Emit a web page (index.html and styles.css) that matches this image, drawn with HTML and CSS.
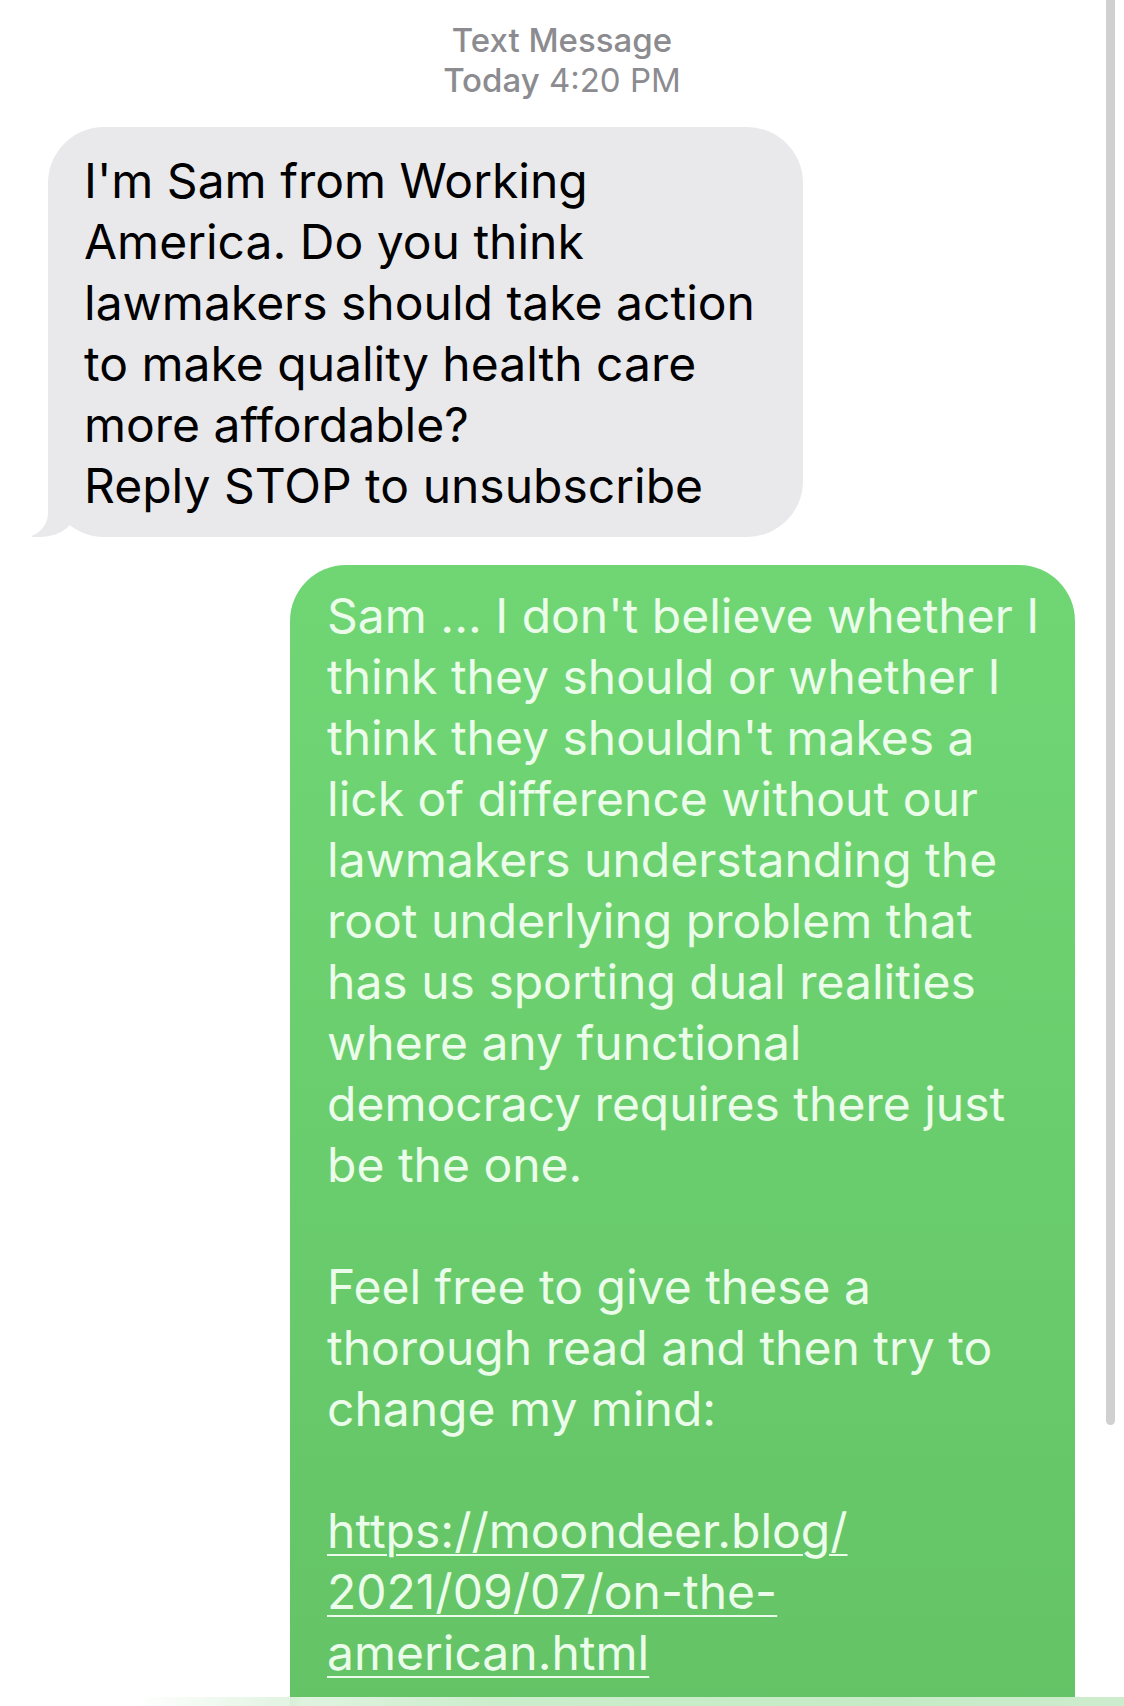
FILE: index.html
```html
<!DOCTYPE html>
<html lang="en">
<head>
<meta charset="utf-8">
<title>Text Message</title>
<link rel="stylesheet" href="styles.css">
</head>
<body>
<div class="screen">
  <header class="thread-header">
    <div class="thread-kind">Text Message</div>
    <div class="thread-time"><span class="day">Today</span> 4:20 PM</div>
  </header>

  <div class="messages">
    <div class="row row-in">
      <div class="bubble bubble-in">
        I'm Sam from Working<br>
        America. Do you think<br>
        lawmakers should take action<br>
        to make quality health care<br>
        more affordable?<br>
        Reply STOP to unsubscribe
      </div>
    </div>

    <div class="row row-out">
      <div class="bubble bubble-out">
        <p class="para">Sam ... I don't believe whether I<br>
        think they should or whether I<br>
        think they shouldn't makes a<br>
        lick of difference without our<br>
        lawmakers understanding the<br>
        root underlying problem that<br>
        has us sporting dual realities<br>
        where any functional<br>
        democracy requires there just<br>
        be the one.</p>
        <p class="para">Feel free to give these a<br>
        thorough read and then try to<br>
        change my mind:</p>
        <p class="para"><a class="link" href="#">https://moondeer.blog/<br>2021/09/07/on-the-<br>american.html</a></p>
      </div>
    </div>
  </div>

  <div class="scrollbar"></div>
  <div class="bottom-fade"></div>
</div>
</body>
</html>
```

FILE: styles.css
```css
* {
  box-sizing: border-box;
}

html, body {
  margin: 0;
  padding: 0;
  background: #ffffff;
}

.screen {
  position: relative;
  width: 1124px;
  height: 1706px;
  overflow: hidden;
  font-family: "Inter", "Roboto", "Liberation Sans", sans-serif;
  background: #ffffff;
}

.thread-header {
  padding-top: 21px;
  text-align: center;
  color: #8b8b90;
  font-size: 33px;
  line-height: 39.5px;
  font-weight: 500;
}

.thread-time {
  font-weight: 400;
}

.thread-time .day {
  font-weight: 500;
}

.messages {
  display: flex;
  flex-direction: column;
  gap: 28px;
  margin-top: 27px;
}

.row {
  display: flex;
}

.row-in {
  justify-content: flex-start;
  padding-left: 48px;
}

.row-out {
  justify-content: flex-end;
  padding-right: 49px;
}

.bubble {
  position: relative;
  font-size: 48px;
  line-height: 61px;
  border-radius: 56px;
}

.bubble-in {
  width: 755px;
  padding: 23px 17px 21px 36px;
  background: #e9e9eb;
  color: #000000;
}

.bubble-in::before {
  content: "";
  position: absolute;
  left: -16px;
  bottom: 0;
  width: 46px;
  height: 58px;
  background: #e9e9eb;
  border-bottom-right-radius: 37px 32px;
}

.bubble-in::after {
  content: "";
  position: absolute;
  left: -60px;
  bottom: 0;
  width: 60px;
  height: 58px;
  background: #ffffff;
  border-bottom-right-radius: 24px;
}

.bubble-out {
  width: 785px;
  padding: 20px 18px 80px 37px;
  background: linear-gradient(180deg, #70d674 0%, #6acd6d 50%, #63c265 100%);
  color: #ebfdea;
}

.para {
  margin: 0 0 61px 0;
}

.para:last-child {
  margin-bottom: 0;
}

.link {
  color: #ebfdea;
  text-decoration: underline;
  text-decoration-thickness: 2px;
  text-underline-offset: 6px;
}

.scrollbar {
  position: absolute;
  top: 0;
  left: 1106px;
  width: 9px;
  height: 1425px;
  background: #d0d0d0;
  border-radius: 0 0 5px 5px;
}

.bottom-fade {
  position: absolute;
  left: 0;
  right: 0;
  bottom: 0;
  height: 9px;
  background: linear-gradient(90deg, rgba(205, 237, 205, 0) 12%, #dff3df 27%, #cbedcb 45%, #c6eac6 80%, #cdeccd 100%);
}
```
